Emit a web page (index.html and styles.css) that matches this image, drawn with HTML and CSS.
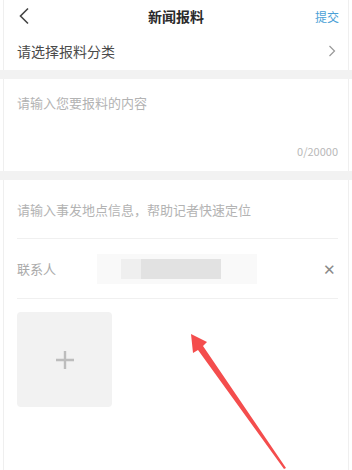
FILE: index.html
```html
<!DOCTYPE html>
<html lang="zh">
<head>
<meta charset="utf-8">
<link rel="stylesheet" href="styles.css">
</head>
<body>
<div class="page">
  <header class="topbar">
    <svg class="back" width="12" height="18" viewBox="0 0 12 18"><path d="M10 1.5 L2.5 9 L10 16.5" fill="none" stroke="#444" stroke-width="1.6"/></svg>
    <div class="title">新闻报料</div>
    <div class="submit">提交</div>
  </header>
  <div class="row category">
    <span>请选择报料分类</span>
    <svg width="8" height="12" viewBox="0 0 8 12"><path d="M1.5 1 L6.5 6 L1.5 11" fill="none" stroke="#999" stroke-width="1.2"/></svg>
  </div>
  <div class="band"></div>
  <div class="content">
    <div class="placeholder">请输入您要报料的内容</div>
    <div class="counter">0/20000</div>
  </div>
  <div class="band band2"></div>
  <div class="field location">
    <span class="placeholder">请输入事发地点信息，帮助记者快速定位</span>
  </div>
  <div class="field contact">
    <span class="label">联系人</span>
    <div class="blur">
      <i class="b1"></i><i class="b2"></i>
    </div>
    <span class="close">✕</span>
  </div>
  <div class="uploads">
    <div class="add">
      <svg width="22" height="22" viewBox="0 0 22 22"><path d="M11 2 V20 M2 11 H20" stroke="#bdbdbd" stroke-width="2.4"/></svg>
    </div>
  </div>
  <svg class="arrow" width="352" height="470" viewBox="0 0 352 470">
    <polygon points="191,334 207,342 203,346 286,468 284,469 198,350 193,353" fill="#f44d4d"/>
  </svg>
</div>
</body>
</html>
```
FILE: styles.css
```css
* { box-sizing: border-box; }
html, body { margin: 0; padding: 0; background: #fff; }
body {
  font-family: "Noto Sans CJK SC", "Noto Sans", sans-serif;
  width: 352px;
  height: 470px;
  overflow: hidden;
}
.page {
  position: relative;
  height: 470px;
  margin: 0 3px;
  border-left: 1px solid #efefef;
  border-right: 1px solid #efefef;
}
.topbar {
  height: 32px;
  display: flex;
  align-items: center;
  justify-content: space-between;
  padding: 0 9px 0 14px;
  position: relative;
}
.title {
  position: absolute;
  left: 0; right: 0;
  text-align: center;
  font-size: 14px;
  font-weight: 700;
  color: #2a2a2a;
  pointer-events: none;
}
.submit { font-size: 12px; color: #4a9fd6; }
.row {
  height: 38px;
  display: flex;
  align-items: center;
  justify-content: space-between;
  padding: 0 12px 0 13px;
  font-size: 14px;
  color: #4a4a4a;
}
.band { height: 9px; background: #f2f2f2; margin: 0 -4px; }
.content {
  height: 92px;
  padding: 14px 10px 0 13px;
  display: flex;
  flex-direction: column;
  justify-content: space-between;
}
.placeholder { font-size: 13px; color: #b3b3b3; }
.counter {
  align-self: flex-end;
  font-size: 11px;
  color: #b8b8b8;
  padding-bottom: 12px;
}
.field {
  margin: 0 10px 0 13px;
  display: flex;
  align-items: center;
  border-bottom: 1px solid #f0f0f0;
}
.location { height: 59px; }
.contact { height: 60px; position: relative; }
.label { font-size: 13px; color: #aaa; width: 80px; }
.blur {
  width: 160px;
  height: 30px;
  background: #f9f9f9;
  display: flex;
  align-items: center;
  padding-left: 24px;
}
.blur i { display: block; height: 20px; }
.b1 { width: 20px; background: #efefef; }
.b2 { width: 80px; background: #e2e2e2; }
.close { margin-left: auto; margin-right: 2px; font-size: 15px; color: #8a8a8a; }
.uploads { padding: 13px 13px; }
.add {
  width: 95px;
  height: 95px;
  border-radius: 4px;
  background: #f2f2f2;
  display: flex;
  align-items: center;
  justify-content: center;
}
.arrow { position: absolute; left: -4px; top: 0; }
```
